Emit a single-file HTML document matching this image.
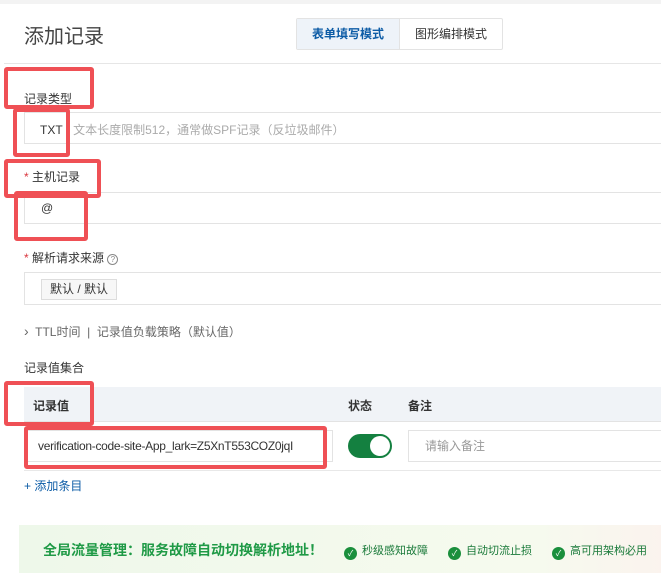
<!DOCTYPE html>
<html><head><meta charset="utf-8"><style>
*{margin:0;padding:0;box-sizing:border-box}
body{width:661px;height:579px;background:#fff;position:relative;overflow:hidden;font-family:"Liberation Sans","Noto Sans CJK SC",sans-serif;color:#333;font-size:12px}
.a{position:absolute;white-space:nowrap}
.inp{position:absolute;left:24px;right:-2px;border:1px solid #e3e3e3;background:#fff}
.rb{position:absolute;border:4px solid #ef5055;border-radius:3px}
.lbl{font-size:12px;color:#333}
.star{color:#d9363e}
.chk{display:inline-block;width:13px;height:13px;border-radius:50%;background:#1a8f3c;color:#fff;font-size:8px;line-height:13px;text-align:center;vertical-align:-2px;margin-right:5px}
</style></head><body>
<div class="a" style="left:0;top:0;width:661px;height:4px;background:#f3f3f3"></div>
<div class="a" style="left:24px;top:20px;font-size:20px;color:#444">添加记录</div>
<div class="a" style="left:296px;top:18px;width:207px;height:32px;border:1px solid #e3e3e3;border-radius:2px;display:flex">
 <div style="width:103px;background:#eef3f9;color:#0d5ca6;font-weight:bold;font-size:12px;line-height:30px;text-align:center;border-right:1px solid #e3e3e3">表单填写模式</div>
 <div style="flex:1;font-size:12px;line-height:30px;text-align:center;color:#333">图形编排模式</div>
</div>
<div class="a" style="left:4px;top:63px;width:657px;height:1px;background:#e6e6e6"></div>

<div class="a lbl" style="left:24px;top:90px">记录类型</div>
<div class="inp" style="top:112px;height:32px"></div>
<div class="a" style="left:40px;top:121px;font-size:12px;color:#333">TXT <span style="color:#aaa">- 文本长度限制512，通常做SPF记录（反垃圾邮件）</span></div>

<div class="a lbl" style="left:24px;top:168px"><span class="star">*</span> 主机记录</div>
<div class="inp" style="top:192px;height:32px"></div>
<div class="a" style="left:41px;top:201px;font-size:12px">@</div>

<div class="a lbl" style="left:24px;top:249px"><span class="star">*</span> 解析请求来源 <span style="display:inline-block;width:11px;height:11px;border:1px solid #888;border-radius:50%;font-size:8px;line-height:9px;text-align:center;color:#888;vertical-align:0">?</span></div>
<div class="inp" style="top:272px;height:33px"></div>
<div class="a" style="left:41px;top:279px;width:76px;height:21px;border:1px solid #ddd;background:#f7f7f7;font-size:12px;line-height:19px;text-align:center">默认 / 默认</div>

<div class="a" style="left:24px;top:323px;font-size:12px;color:#666"><span style="font-size:14px">›</span>&nbsp; TTL时间 &nbsp;|&nbsp; 记录值负载策略（默认值）</div>
<div class="a lbl" style="left:24px;top:359px">记录值集合</div>

<div class="a" style="left:24px;top:387px;width:640px;height:35px;background:#f0f3f7;border-bottom:1px solid #e3e3e3"></div>
<div class="a" style="left:33px;top:397px;font-weight:bold;font-size:12px">记录值</div>
<div class="a" style="left:348px;top:397px;font-weight:bold;font-size:12px">状态</div>
<div class="a" style="left:408px;top:397px;font-weight:bold;font-size:12px">备注</div>

<div class="a" style="left:24px;top:430px;width:309px;height:32px;border:1px solid #e3e3e3;background:#fff;overflow:hidden;font-size:12px;line-height:30px;padding-left:13px;letter-spacing:-0.3px">verification-code-site-App_lark=Z5XnT553COZ0jqI</div>
<div class="a" style="left:348px;top:434px;width:44px;height:24px;border-radius:12px;background:#148040"><div style="position:absolute;right:2px;top:2px;width:20px;height:20px;border-radius:50%;background:#fff"></div></div>
<div class="a" style="left:408px;top:430px;width:260px;height:32px;border:1px solid #e3e3e3;font-size:12px;line-height:30px;padding-left:16px;color:#999">请输入备注</div>
<div class="a" style="left:24px;top:470px;width:640px;height:1px;background:#e8e8e8"></div>
<div class="a" style="left:24px;top:477px;font-size:12px;color:#0d5ca6">+ 添加条目</div>

<div class="a" style="left:19px;top:525px;width:645px;height:48px;background:linear-gradient(90deg,#eef8ea,#f6faee 80%,#fbf3ee)"></div>
<div class="a" style="left:43px;top:540px;font-size:14px;font-weight:bold;color:#1f9a46">全局流量管理：服务故障自动切换解析地址！</div>
<div class="a" style="left:344px;top:542px;font-size:11px;color:#1a7a3a"><span class="chk">✓</span>秒级感知故障</div>
<div class="a" style="left:448px;top:542px;font-size:11px;color:#1a7a3a"><span class="chk">✓</span>自动切流止损</div>
<div class="a" style="left:552px;top:542px;font-size:11px;color:#1a7a3a"><span class="chk">✓</span>高可用架构必用</div>

<div class="rb" style="left:4px;top:67px;width:90px;height:42px"></div>
<div class="rb" style="left:13px;top:108px;width:57px;height:49px"></div>
<div class="rb" style="left:4px;top:159px;width:97px;height:39px"></div>
<div class="rb" style="left:14px;top:191px;width:74px;height:50px"></div>
<div class="rb" style="left:4px;top:381px;width:90px;height:45px"></div>
<div class="rb" style="left:24px;top:426px;width:303px;height:43px"></div>
</body></html>
